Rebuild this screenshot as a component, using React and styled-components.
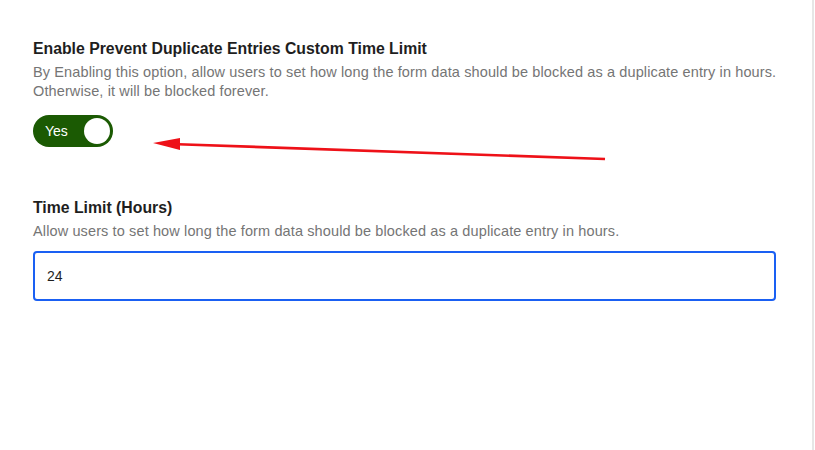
import styled, { createGlobalStyle } from "styled-components";

const Global = createGlobalStyle`
  html, body { margin: 0; padding: 0; background: #fff; }
  body { font-family: "Liberation Sans", Arial, sans-serif; -webkit-font-smoothing: antialiased; }
`;

const Page = styled.div`
  position: relative;
  width: 815px;
  height: 450px;
  display: flex;
  overflow: hidden;
`;

const Panel = styled.div`
  width: 814px;
  border-right: 2px solid #e6e6e6;
  padding: 39px 0 0 33px;
  box-sizing: border-box;
  display: flex;
  flex-direction: column;
`;

const Field = styled.div`
  display: flex;
  flex-direction: column;
  margin-bottom: ${(p) => p.$gap || 0}px;
`;

const Title = styled.h3`
  margin: 0 0 4px;
  font-size: 15.8px;
  line-height: 20px;
  font-weight: 700;
  color: #1e1e1e;
`;

const Help = styled.p`
  margin: 0;
  font-size: 14.5px;
  letter-spacing: 0.12px;
  line-height: 19px;
  color: #757575;
  max-width: 770px;
`;

const Toggle = styled.button`
  margin-top: 14px;
  width: 80px;
  height: 32px;
  border: 0;
  border-radius: 16px;
  background: #1b5a03;
  display: flex;
  align-items: center;
  justify-content: space-between;
  padding: 0 3px 0 12px;
  box-sizing: border-box;
  cursor: pointer;
`;

const ToggleText = styled.span`
  font-family: "Liberation Sans", Arial, sans-serif;
  font-size: 14px;
  color: #fff;
`;

const Knob = styled.span`
  width: 26px;
  height: 26px;
  border-radius: 50%;
  background: #fff;
`;

const Input = styled.input`
  margin-top: 10px;
  width: 743px;
  height: 50px;
  box-sizing: border-box;
  border: 2px solid #1a60f3;
  border-radius: 4px;
  padding: 0 12px;
  font-family: "Liberation Sans", Arial, sans-serif;
  font-size: 14px;
  color: #1e1e1e;
  outline: none;
`;

const Arrow = styled.svg`
  position: absolute;
  left: 0;
  top: 0;
  pointer-events: none;
`;

export default function App() {
  return (
    <Page>
      <Global />
      <Panel>
        <Field $gap={51}>
          <Title>Enable Prevent Duplicate Entries Custom Time Limit</Title>
          <Help>
            By Enabling this option, allow users to set how long the form data should be blocked as a duplicate entry in hours.
            Otherwise, it will be blocked forever.
          </Help>
          <Toggle>
            <ToggleText>Yes</ToggleText>
            <Knob />
          </Toggle>
        </Field>
        <Field>
          <Title>Time Limit (Hours)</Title>
          <Help>Allow users to set how long the form data should be blocked as a duplicate entry in hours.</Help>
          <Input defaultValue="24" />
        </Field>
      </Panel>
      <Arrow width="815" height="450" viewBox="0 0 815 450">
        <line x1="605" y1="159" x2="178" y2="144.2" stroke="#ee1118" strokeWidth="2.6" />
        <polygon points="153,143 180,138 180,150" fill="#ee1118" />
      </Arrow>
    </Page>
  );
}
